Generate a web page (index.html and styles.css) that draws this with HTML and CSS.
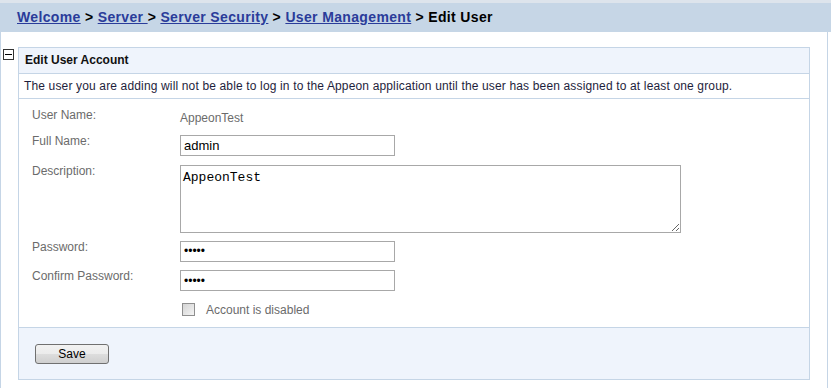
FILE: index.html
```html
<!DOCTYPE html>
<html lang="en">
<head>
  <meta charset="UTF-8" />
  <title>Edit User</title>
  <link rel="stylesheet" href="styles.css">
</head>
<body>
  <div class="crumbs">
    <a href="#">Welcome</a> &gt; <a href="#">Server </a>&gt; <a href="#">Server Security</a> &gt; <a href="#">User Management</a> &gt; Edit User
  </div>
  <div class="main">
    <span class="toggle"></span>
    <div class="panel">
      <div class="panel-head">Edit User Account</div>
      <div class="panel-note">The user you are adding will not be able to log in to the Appeon application until the user has been assigned to at least one group.</div>
      <div class="form">
        <label>User Name:</label>
        <div class="value">AppeonTest</div>
        <label>Full Name:</label>
        <input type="text" class="field" value="admin" />
        <label>Description:</label>
        <textarea class="area">AppeonTest</textarea>
        <label>Password:</label>
        <input type="password" class="field" value="admin" />
        <label>Confirm Password:</label>
        <input type="password" class="field" value="admin" />
        <span></span>
        <div class="check"><span class="box"></span><span>Account is disabled</span></div>
      </div>
      <div class="panel-foot">
        <button class="btn">Save</button>
      </div>
    </div>
  </div>
</body>
</html>
```

FILE: styles.css
```css
body {
  margin: 0;
  font-family: "Liberation Sans", Arial, sans-serif;
  font-size: 12px;
  color: #222;
  border-top: 3px solid #dde4ec;
}
.crumbs {
  height: 29px;
  line-height: 29px;
  background: #c6d6e6;
  padding-left: 17px;
  font-size: 14px;
  font-weight: bold;
  letter-spacing: 0.35px;
  color: #000;
}
.crumbs a {
  color: #2a3c9a;
}
.main {
  display: flex;
  align-items: flex-start;
  width: 828px;
  height: 356px;
  border-left: 1px solid #c5d5e6;
  border-right: 1px solid #c5d5e6;
  padding-top: 15px;
  box-sizing: border-box;
}
.toggle {
  width: 9px;
  height: 9px;
  border: 1px solid #333;
  margin: 2px 0 0 2px;
  position: relative;
}
.toggle::after {
  content: "";
  position: absolute;
  left: 1px;
  right: 1px;
  top: 4px;
  height: 1px;
  background: #000;
}
.panel {
  width: 792px;
  margin-left: 4px;
  border: 1px solid #c5d5e6;
  box-sizing: border-box;
}
.panel-head {
  height: 25px;
  line-height: 25px;
  padding-left: 6px;
  background: #eff4fc;
  border-bottom: 1px solid #c5d5e6;
  font-weight: bold;
  color: #111;
}
.panel-note {
  height: 24px;
  line-height: 24px;
  padding-left: 5px;
  border-bottom: 1px solid #c5d5e6;
  letter-spacing: 0.15px;
  color: #1e1e3c;
}
.form {
  display: grid;
  grid-template-columns: 148px 1fr;
  row-gap: 8px;
  padding: 10px 0 10px 13px;
  height: 228px;
  box-sizing: border-box;
}
.form label {
  color: #6b6b6b;
  line-height: 12px;
}
.value {
  color: #6b6b6b;
  line-height: 16px;
  margin: 1px 0 1px;
}
.field {
  width: 215px;
  height: 21px;
  box-sizing: border-box;
  border: 1px solid #a8a8a8;
  padding: 1px 3px;
  font-family: "Liberation Sans", Arial, sans-serif;
  font-size: 13px;
  color: #000;
  margin: 0;
}
input[type="password"].field {
  font-size: 12px;
}
.area {
  width: 501px;
  height: 68px;
  box-sizing: border-box;
  border: 1px solid #a8a8a8;
  padding: 4px 2px;
  font-family: "Liberation Mono", "Courier New", monospace;
  font-size: 13px;
  color: #000;
  margin: 0;
  resize: both;
}
.check {
  display: flex;
  align-items: center;
  gap: 11px;
  color: #6b6b6b;
  margin-top: 3px;
}
.box {
  width: 11px;
  height: 11px;
  margin-left: 2px;
  border: 1px solid #8f8f8f;
  background: linear-gradient(135deg, #d4d4d4, #f4f4f4);
}
.panel-foot {
  height: 52px;
  background: #eff4fc;
  border-top: 1px solid #c5d5e6;
  padding: 16px 0 0 16px;
  box-sizing: border-box;
}
.btn {
  width: 74px;
  height: 20px;
  border: 1px solid #707070;
  border-radius: 3px;
  background: linear-gradient(#f2f2f2, #ebebeb 50%, #dddddd 51%, #cfcfcf);
  font-family: "Liberation Sans", Arial, sans-serif;
  font-size: 12px;
  color: #000;
  padding: 0;
}
```
